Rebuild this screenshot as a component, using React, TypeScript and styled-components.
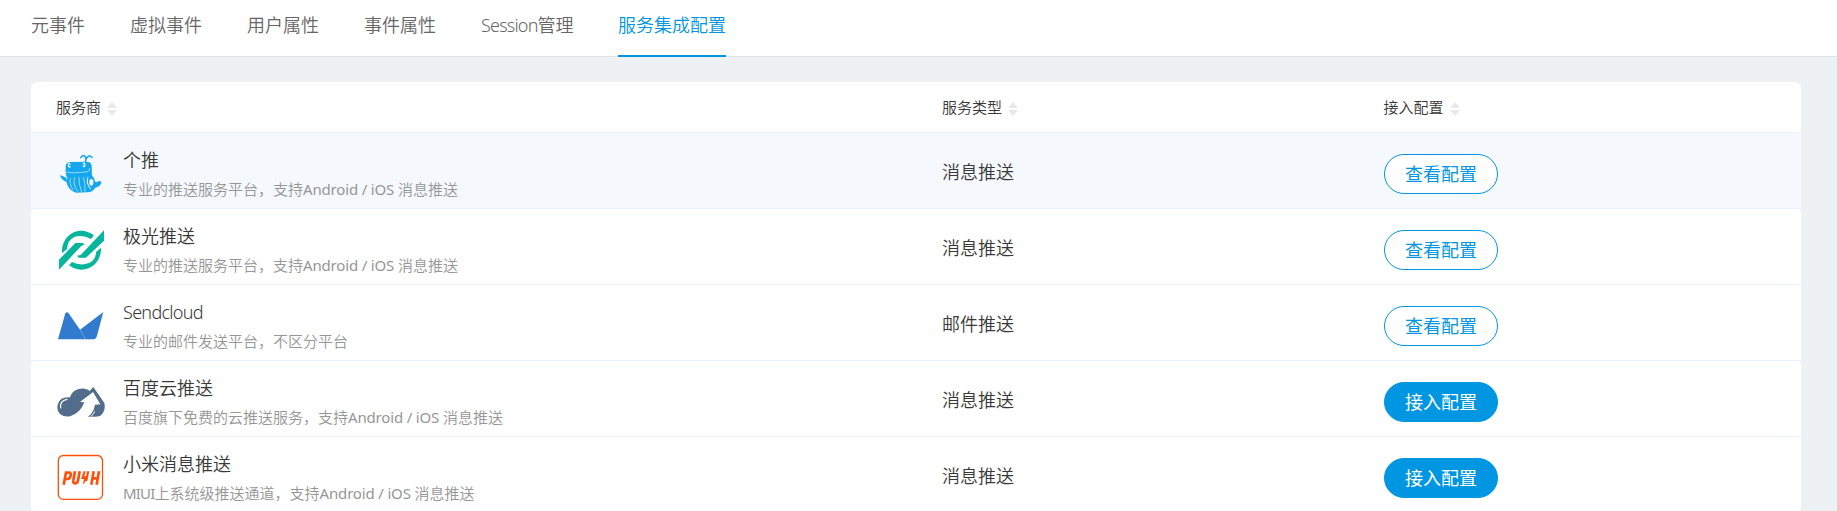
import React from 'react';
import styled, { createGlobalStyle } from 'styled-components';

const GlobalStyle = createGlobalStyle`
  * { box-sizing: border-box; }
  html, body { margin: 0; height: 100%; overflow: hidden; background: #edf1f4; }
  body {
    font-family: 'Noto Sans', 'Noto Sans CJK SC', sans-serif;
    font-weight: 350;
    color: #383838;
  }
`;

const Latin = styled.span<{ $spacing: number; $light?: boolean }>`
  font-weight: ${(p) => (p.$light ? 300 : 400)};
  letter-spacing: ${(p) => p.$spacing}px;
`;

const Page = styled.div`
  min-height: 511px;
  background: #edf1f4;
`;

const Nav = styled.nav`
  display: flex;
  gap: 45px;
  height: 57px;
  padding-left: 30px;
  background: #fff;
  border-bottom: 1px solid #dfe4e8;
`;

const Tab = styled.a<{ $active?: boolean; $width: number }>`
  flex: none;
  width: ${(p) => p.$width}px;
  height: 57px;
  padding-top: 10px;
  font-size: 18px;
  line-height: 30px;
  text-indent: ${(p) => (p.$active ? 0 : 1)}px;
  white-space: nowrap;
  color: ${(p) => (p.$active ? '#0096e1' : '#666')};
  border-bottom: 2px solid ${(p) => (p.$active ? '#0096e1' : 'transparent')};
`;

const Card = styled.section`
  margin: 25px 36px 0 31px;
  background: #fff;
  border-radius: 6px;
  overflow: hidden;
`;

const columns = `
  display: grid;
  grid-template-columns: 2fr 1fr 1fr;
`;

const HeaderRow = styled.div`
  ${columns}
  height: 51px;
  border-bottom: 1px solid #e9f1fc;
`;

const HeaderCell = styled.div`
  display: flex;
  align-items: center;
  gap: 6px;
  padding: 0 0 0 25px;
  font-size: 15px;
  line-height: 22px;
  &:nth-child(2) { padding-left: 26px; }
`;

const SortIcon = styled.svg`
  width: 10px;
  height: 14px;
  margin-top: 3px;
  fill: #e9e9e9;
`;

const Row = styled.div<{ $hover?: boolean }>`
  ${columns}
  height: 76px;
  background: ${(p) => (p.$hover ? '#f5f9fe' : '#fff')};
  border-bottom: 1px solid #e9f1fc;
  &:last-child { height: 75px; border-bottom: 0; }
`;

const Provider = styled.div`
  display: flex;
  gap: 18px;
  padding: 17px 0 0 26px;
`;

const Logo = styled.svg`
  flex: none;
  width: 48px;
  height: 48px;
`;

const Info = styled.div`
  margin-top: -4px;
  white-space: nowrap;
`;

const Name = styled.div`
  font-size: 18px;
  line-height: 28px;
`;

const Description = styled.div`
  margin-top: 4px;
  font-size: 15px;
  line-height: 22px;
  color: #969696;
`;

const Kind = styled.div`
  padding: 25px 0 0 26px;
  font-size: 18px;
  line-height: 28px;
`;

const Action = styled.div`
  padding: 21px 0 0 25px;
`;

const Button = styled.button<{ $filled?: boolean }>`
  display: block;
  width: 114px;
  height: 40px;
  padding: 0;
  font: inherit;
  font-weight: 400;
  font-size: 18px;
  line-height: 37px;
  text-indent: 1px;
  border: 1px solid #0096e1;
  border-radius: 20px;
  background: ${(p) => (p.$filled ? '#0096e1' : '#fff')};
  color: ${(p) => (p.$filled ? '#fff' : '#0096e1')};
`;

const Sort = () => (
  <SortIcon viewBox="0 0 10 14">
    <path d="M5 0 10 6H0zM0 8h10L5 14z" />
  </SortIcon>
);

const WhaleLogo = () => (
  <Logo viewBox="51 30 144 144">
    <g fill="#14a7ee">
      <path d="M77 80Q77 68 91 66L143 65Q154 66 155 77L156 108Q148 113 143 110L80 113Q75 96 77 80Z" />
      <path d="M60 106Q67 106 79 114L80 126Q63 120 60 106Z" />
      <path d="M78 121Q84 109 99 109Q121 104 140 110L146 106Q162 106 164 122Q166 127 171 127Q177 120 184 126Q184 138 166 143Q160 155 142 157L108 158Q83 152 78 121Z" />
    </g>
    <path d="M136 65Q140 55 135 49Q129 43 122 53M137 60Q142 47 149 48Q155 49 156 53" fill="none" stroke="#14a7ee" strokeWidth="4.5" strokeLinecap="round" />
    <g fill="none" stroke="#f5f9fe" strokeWidth="1.8">
      <path d="M79 96Q96 101 144 95Q150 90 149 84" />
      <path d="M92 115Q86 128 99 150M104 112Q97 131 113 155M117 111Q115 130 125 156M130 112Q137 130 135 155" />
      <path d="M144 112Q137 128 152 148" strokeWidth="3" />
    </g>
    <g fill="#f5f9fe">
      <ellipse cx="88" cy="76" rx="4.5" ry="7.5" />
      <ellipse cx="132" cy="74" rx="4.5" ry="7.5" />
      <ellipse cx="154" cy="127" rx="6" ry="10" />
    </g>
    <g fill="#14a7ee">
      <circle cx="90" cy="76" r="3" />
      <circle cx="130" cy="74" r="3" />
    </g>
  </Logo>
);

const AuroraLogo = () => (
  <Logo viewBox="51 33 144 144" fill="#06b59c">
    <path d="M66 114C64 73 97 40 136 49Q153 53 162 61L153 72Q129 58 105 65Q82 75 81 103Z" />
    <path d="M192 46V77L138 128H116L111 122L122 120Z" />
    <path d="M57 164V134L106 84H128L134 88L123 94Z" />
    <path d="M183 98C185 138 153 170 113 163Q98 160 87 151L96 141Q121 153 145 145Q168 136 168 111Z" />
  </Logo>
);

const SendcloudLogo = () => (
  <Logo viewBox="51 36 144 144">
    <path fill="#317bcf" d="M54 148L76 70Q80 63 86 70L120 119L190 66L171 137Q168 148 158 148Z" />
    <path fill="none" stroke="#8cb4e2" strokeWidth="2" d="M120 119L137 148" />
  </Logo>
);

const BaiduLogo = () => (
  <Logo viewBox="51 24 144 144">
    <path fill="#526d8c" d="M90 82C98 53 137 50 149 63L160 51L193 99Q198 119 184 135Q179 140 165 140H144Q155 132 161 119L165 104L181 103L159 66L120 96L133 97Q122 128 92 138Q75 143 60 132Q48 121 54 101Q62 79 90 82Z" />
    <path fill="none" stroke="#fff" strokeWidth="3.5" strokeLinecap="round" d="M62 114Q58 93 81 88" />
    <path fill="none" stroke="#fff" strokeWidth="3" d="M152 140Q160 134 164 124" />
  </Logo>
);

const MiPushLogo = () => (
  <Logo viewBox="51 27 144 144" fill="none" stroke="#ff500b">
    <rect x="55" y="31.5" width="132.5" height="131.5" rx="15" strokeWidth="4" />
    <g strokeWidth="8">
      <path d="M71 119L78 83H87Q94 83 92 91Q90 102 83 102H74" />
      <path d="M105 79L100 106Q98 115 105 115Q112 115 114 107L119 79" />
      <path d="M154 119L161 79M170 119L177 79M157 100H173" />
    </g>
    <path fill="#ff500b" stroke="none" d="M131 79H137L133 94H138L141 79H148L142 108H138L128 119L132 102H123Z" />
  </Logo>
);

const tabs = [
  { label: '元事件', width: 54 },
  { label: '虚拟事件', width: 72 },
  { label: '用户属性', width: 72 },
  { label: '事件属性', width: 72 },
  { label: <><Latin $light $spacing={-0.8}>Session</Latin>管理</>, width: 93 },
  { label: '服务集成配置', width: 108, active: true },
];

const platforms = <><Latin $spacing={-0.17}>Android / iOS </Latin>消息推送</>;

const services = [
  { logo: <WhaleLogo />, name: '个推', description: <>专业的推送服务平台，支持{platforms}</>, kind: '消息推送', connected: true, hover: true },
  { logo: <AuroraLogo />, name: '极光推送', description: <>专业的推送服务平台，支持{platforms}</>, kind: '消息推送', connected: true },
  { logo: <SendcloudLogo />, name: <Latin $light $spacing={-0.7}>Sendcloud</Latin>, description: '专业的邮件发送平台，不区分平台', kind: '邮件推送', connected: true },
  { logo: <BaiduLogo />, name: '百度云推送', description: <>百度旗下免费的云推送服务，支持{platforms}</>, kind: '消息推送' },
  { logo: <MiPushLogo />, name: '小米消息推送', description: <><Latin $spacing={-0.8}>MIUI</Latin>上系统级推送通道，支持{platforms}</>, kind: '消息推送' },
];

export default function App() {
  return (
    <Page>
      <GlobalStyle />
      <Nav>
        {tabs.map((tab, i) => (
          <Tab key={i} $active={tab.active} $width={tab.width}>{tab.label}</Tab>
        ))}
      </Nav>
      <Card>
        <HeaderRow>
          {['服务商', '服务类型', '接入配置'].map((title) => (
            <HeaderCell key={title}>{title}<Sort /></HeaderCell>
          ))}
        </HeaderRow>
        {services.map((service, i) => (
          <Row key={i} $hover={service.hover}>
            <Provider>
              {service.logo}
              <Info>
                <Name>{service.name}</Name>
                <Description>{service.description}</Description>
              </Info>
            </Provider>
            <Kind>{service.kind}</Kind>
            <Action>
              <Button $filled={!service.connected}>{service.connected ? '查看配置' : '接入配置'}</Button>
            </Action>
          </Row>
        ))}
      </Card>
    </Page>
  );
}
